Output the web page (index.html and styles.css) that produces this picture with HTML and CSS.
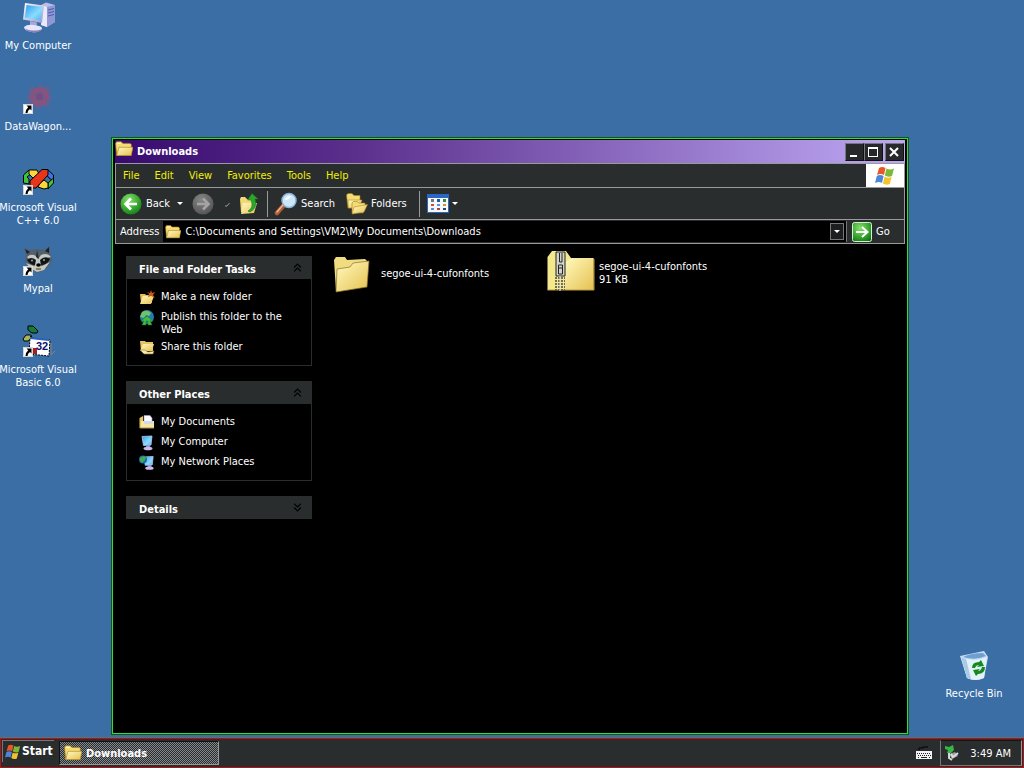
FILE: index.html
```html
<!DOCTYPE html>
<html lang="en">
<head>
    <meta charset="UTF-8">
    <meta name="viewport" content="width=device-width, initial-scale=1.0">
    <title>Downloads</title>
    <link rel="stylesheet" href="styles.css">
</head>
<body>
    <!-- Shared icons -->
    <svg class="sprite" aria-hidden="true">
        <defs>
            <linearGradient id="g-folder" x1="0" y1="0" x2="1" y2="1">
                <stop offset="0" stop-color="#fffbc0"/><stop offset="1" stop-color="#e6c050"/>
            </linearGradient>
            <linearGradient id="g-screen" x1="0" y1="0" x2="1" y2="1">
                <stop offset="0" stop-color="#2f9cf0"/><stop offset="0.6" stop-color="#8adcff"/><stop offset="1" stop-color="#4fb0f0"/>
            </linearGradient>
            <linearGradient id="g-metal" x1="0" y1="0" x2="1" y2="1">
                <stop offset="0" stop-color="#ffffff"/><stop offset="1" stop-color="#9a98cc"/>
            </linearGradient>
            <radialGradient id="g-green" cx="0.4" cy="0.3" r="0.8">
                <stop offset="0" stop-color="#8be070"/><stop offset="0.6" stop-color="#34a52c"/><stop offset="1" stop-color="#14701a"/>
            </radialGradient>
            <radialGradient id="g-grey" cx="0.4" cy="0.3" r="0.8">
                <stop offset="0" stop-color="#858585"/><stop offset="1" stop-color="#505050"/>
            </radialGradient>
        </defs>
        <symbol id="folder" viewBox="0 0 16 16">
            <path d="M0.5 3 L1.5 1.5 H5.5 L7 3 H13.5 L14.5 4 V13.5 H1.5 Z" fill="#f5dc72" stroke="#a87e1c" stroke-width="0.6"/>
            <path d="M3.5 6.5 H16 L14.3 13.8 H1.5 Z" fill="url(#g-folder)" stroke="#b08a28" stroke-width="0.6"/>
            <path d="M2 3 H5" stroke="#fffbd0"/>
        </symbol>
        <symbol id="flag" viewBox="0 0 20 18">
            <path d="M4 1 Q7 -1 10.500 1 L9 8 Q5.500 6 2 8 Z" fill="#e8572a"/>
            <path d="M11.500 1.500 Q15 3.500 19 1.500 L17 9 Q13 10.500 9.800 8.500 Z" fill="#7db83a"/>
            <path d="M1.800 9 Q5 7 8.600 9 L7 16 Q4 14 0 16 Z" fill="#4a86dc"/>
            <path d="M9.600 9.500 Q12 11.500 16.600 10 L14.800 17 Q11 18.500 7.900 16.500 Z" fill="#f4c22c"/>
        </symbol>
        <symbol id="pc" viewBox="0 0 16 16">
            <path d="M3 1.500 L13 1 L12 10 L4.500 10.500 Z" fill="url(#g-screen)" stroke="#b4c8f0" stroke-width="0.8"/>
            <path d="M7 10 H11 L11.500 13 H7 Z" fill="#7e9be0"/>
            <ellipse cx="9" cy="13.500" rx="4.500" ry="1.800" fill="#d4b8ec"/>
        </symbol>
        <symbol id="shortcut" viewBox="0 0 10 10">
            <path d="M0 0 H10 V10 H0 Z" fill="#fff"/>
            <path d="M0.500 0.500 H9.500 V9.500 H0.500 Z" fill="none" stroke="#b8b8b8" stroke-width="0.6"/>
            <path d="M3.500 1.500 H8.500 V6.500 L7 5 Q4.500 6.500 4.500 9 H2.500 Q2.500 5.500 5.200 3.200 Z" fill="#000"/>
        </symbol>
    </svg>

    <main class="desktop">
        <nav class="desktop-icons" aria-label="Desktop">
            <a class="shortcut" href="#">
                <svg viewBox="0 0 32 32">
                    <path d="M19 3 L24 0.500 L33 3 V20 L25 25 L19 23 Z" fill="#b9bde8"/>
                    <path d="M19 3 L25 5 V25 L19 23 Z" fill="#e9e9fc"/>
                    <path d="M25 5 L33 3 V20 L25 25 Z" fill="#8f96d4"/>
                    <path d="M26 8 L32 6.500 M26 11 L32 9.500 M26 14 L32 12.500" stroke="#4f5aa8"/>
                    <path d="M3 1 L22 3.500 L20 21 L1 17.500 Z" fill="url(#g-metal)"/>
                    <path d="M4.500 3 L20.300 5 L18.600 18.500 L2.800 15.800 Z" fill="url(#g-screen)"/>
                    <path d="M8 19 L15 20.500 L14.500 25 H8 Z" fill="#a6a8dc"/>
                    <path d="M2 25 Q5 22 12 23 Q21 24 20 27 Q16 31 10 30 Q2 29 2 25 Z" fill="#e8e6fa"/>
                    <path d="M2 26 Q5 30 12 30.500 Q17 31 20 27 Q16 29 11 28.500 Q5 28 2 26 Z" fill="#8a80b8"/>
                </svg>
                <span>My Computer</span>
            </a>
            <a class="shortcut" href="#">
                <svg viewBox="0 0 32 32">
                    <path d="M9 3 L15 5 L19 1 L22 4 L28 3 L27 9 L30 14 L27 19 L28 24 L20 23 L16 27 L12 23 L7 20 L5 15 L7 9 Z" fill="#8c5484" opacity="0.5"/>
                    <circle cx="17.500" cy="13.500" r="7" fill="none" stroke="#b8435f" stroke-width="4" stroke-dasharray="3 1" opacity="0.6"/>
                    <circle cx="17.500" cy="13.500" r="3.500" fill="#7a4a80"/>
                    <use href="#shortcut" x="1" y="21" width="10" height="10"/>
                </svg>
                <span>DataWagon...</span>
            </a>
            <a class="shortcut" href="#">
                <svg viewBox="0 0 32 32">
                    <g stroke="#000" stroke-width="1" stroke-linejoin="round">
                        <path d="M7 6 L1.500 11 V19 L7 20 V15 L5 13 L10 9 Z" fill="#3cc43c"/>
                        <path d="M7 6 H15 L17 10 L11 14 L7 10 Z" fill="#f8d83c"/>
                        <path d="M26 6 L31.500 11 V17 L27 14 L24 10 Z" fill="#3f74e0"/>
                        <path d="M31.500 14 V19 L26 25 V19 Z" fill="#40c840"/>
                        <path d="M18 19 L22 16 L26 19 V24 L22 25 L16 23 Z" fill="#f8d83c"/>
                        <path d="M20 5.500 H26 V11 L14 24 H8 V17 Z" fill="#e83418"/>
                    </g>
                    <use href="#shortcut" x="1" y="21" width="10" height="10"/>
                </svg>
                <span>Microsoft Visual C++ 6.0</span>
            </a>
            <a class="shortcut" href="#">
                <svg viewBox="0 0 32 32">
                    <path d="M2 3 L9 5 Q15 3 22 5 L28 1 L28 9 L30 14 L28 20 L22 25 L15 28 L7 22 L3 17 L4 10 Z" fill="#51606a"/>
                    <path d="M3 4 L8 7 L5 9 Z M27 2 L23 6 L27 8 Z" fill="#1c2228"/>
                    <path d="M5 12 Q9 8 14 11 L16 14 L19 10 Q25 7 29 12 L24 13 L20 15 L18 21 L13 21 L12 15 L7 14 Z" fill="#c4c8c2"/>
                    <path d="M5 15 Q9 11 14 15 L13 20 Q8 20 5 15 Z M18 15 Q23 10 28 14 Q25 20 19 20 Z" fill="#111518"/>
                    <path d="M15 5 L17 14 L14 12 Z" fill="#22282c"/>
                    <path d="M4 18 L12 21 L15 20 L20 21 L28 17 L22 25 L15 27 L8 23 Z" fill="#c8c6b8"/>
                    <circle cx="10" cy="15.500" r="1" fill="#9aa"/><circle cx="22" cy="15" r="1" fill="#9aa"/>
                    <ellipse cx="16.500" cy="20" rx="2.300" ry="1.800" fill="#000"/>
                    <path d="M14 24 H19" stroke="#433"/>
                    <use href="#shortcut" x="1" y="21" width="10" height="10"/>
                </svg>
                <span>Mypal</span>
            </a>
            <a class="shortcut" href="#">
                <svg viewBox="0 0 32 32">
                    <g stroke="#000">
                        <path d="M6 0 H11 L16 5 L15 7 H10 L6 4 Z" fill="#177a38"/>
                        <path d="M1 13 L4 9 H9 L10 12 L6 15 H2 Z" fill="#a7b850"/>
                        <path d="M8 10 L11 12" fill="none"/>
                        <path d="M8 12 L28 14 L27 30 L7 28 Z" fill="#fff" stroke-dasharray="2 1"/>
                    </g>
                    <path d="M29 17 V29 L33 25" stroke="#858585" fill="none"/>
                    <path d="M8 12 L27 14" stroke="#2f62bc" stroke-width="2"/>
                    <path d="M10 22 H15 V28 H10 Z" fill="#a32020"/>
                    <text x="14" y="24" class="badge-number">32</text>
                    <use href="#shortcut" x="1" y="21" width="10" height="10"/>
                </svg>
                <span>Microsoft Visual Basic 6.0</span>
            </a>
        </nav>

        <a class="shortcut recycle-bin" href="#">
            <svg viewBox="0 0 32 32">
                <path d="M2 6 L26 1 L30 7 L26 28 Q17 32 9 28 Z" fill="#c4dff0"/>
                <path d="M3 7 Q16 13 29 7 L26 28 Q17 32 9 28 Z" fill="#e3f1fa"/>
                <path d="M5 7 Q13 3 25 3 L28 6 Q17 11 5 7 Z" fill="#6f9fd0"/>
                <path d="M3 7 L9 28 L13 29 L8 9 Z" fill="#a8cbe8"/>
                <path d="M14 18 Q14 12 21 12 L23 10 L26 16 L19 17 L21 15 Q18 15 17 18 Z M27 17 Q27 24 20 24 L18 26 L15 20 L22 19 L20 21 Q23 21 24 17 Z" fill="#158a1c"/>
            </svg>
            <span>Recycle Bin</span>
        </a>

        <section class="window">
            <header class="title-bar">
                <svg class="icon-18"><use href="#folder"/></svg>
                <h1>Downloads</h1>
                <div class="window-buttons">
                    <button type="button" aria-label="Minimize"><svg viewBox="0 0 16 16"><path d="M4 12 H11" stroke="#fff" stroke-width="2"/></svg></button>
                    <button type="button" aria-label="Maximize"><svg viewBox="0 0 16 16"><path d="M3 3.500 H13 M3.500 3 V13 M12.500 3 V13 M3 12.500 H13 M3 4.500 H13" stroke="#fff"/></svg></button>
                    <button type="button" aria-label="Close" class="close"><svg viewBox="0 0 16 16"><path d="M4 4 L12 12 M12 4 L4 12" stroke="#fff" stroke-width="2"/></svg></button>
                </div>
            </header>

            <div class="menu-bar">
                <button type="button">File</button>
                <button type="button">Edit</button>
                <button type="button">View</button>
                <button type="button">Favorites</button>
                <button type="button">Tools</button>
                <button type="button">Help</button>
                <div class="brand"><svg><use href="#flag"/></svg></div>
            </div>

            <div class="tool-bar">
                <button type="button" class="back">
                    <svg class="icon-22" viewBox="0 0 22 22">
                        <circle cx="11" cy="11" r="10.500" fill="url(#g-green)"/>
                        <path d="M17 11 H6 M11 5.500 L5.500 11 L11 16.500" fill="none" stroke="#fff" stroke-width="2.600"/>
                    </svg>
                    Back
                    <i class="arrow"></i>
                </button>
                <button type="button" class="forward" aria-label="Forward" disabled>
                    <svg class="icon-22" viewBox="0 0 22 22">
                        <circle cx="11" cy="11" r="10.500" fill="url(#g-grey)"/>
                        <path d="M5 11 H16 M11 5.500 L16.500 11 L11 16.500" fill="none" stroke="#a4a4a4" stroke-width="2.600"/>
                    </svg>
                    <svg class="faded-arrow" viewBox="0 0 6 6"><path d="M1 5 H3 M3 5 L5.500 2" stroke="#999" fill="none"/></svg>
                </button>
                <button type="button" class="up" aria-label="Up">
                    <svg class="icon-22" viewBox="0 0 22 22">
                        <path d="M2 6 L3 4 H7 L9 6 H16 V19 H3 Z" fill="#f2d877"/>
                        <path d="M5 10 H19 L16 20 L3 21 Z" fill="url(#g-folder)"/>
                        <path d="M10 18 Q16 15 13 7 H9.500 L14 0.500 L20 6 H17 Q20 15 12 19 Z" fill="#2da52d" stroke="#127a18" stroke-width="0.600"/>
                    </svg>
                </button>
                <span class="divider"></span>
                <button type="button" class="search">
                    <svg class="icon-24" viewBox="0 0 24 24">
                        <path d="M10 13 L3 21" stroke="#b05c38" stroke-width="4.500" stroke-linecap="round"/>
                        <path d="M9 13 L3 20" stroke="#f0b08c" stroke-width="1.500" stroke-linecap="round"/>
                        <circle cx="15" cy="8.500" r="7" fill="#cbe8fa" stroke="#8fb2d8" stroke-width="1.500"/>
                        <path d="M11 8 Q12 4 17 4 Q15 8 11 8" fill="#fff"/>
                    </svg>
                    Search
                </button>
                <button type="button" class="folders">
                    <svg class="icon-22" viewBox="0 0 22 22">
                        <path d="M0.500 2 L2 0.500 H6 L8 2.500 H14 V6 L12 15 H2 Z" fill="#f5dc72" stroke="#a87e1c" stroke-width="0.600"/>
                        <path d="M2 7 H16 L13 15 H2.500 Z" fill="url(#g-folder)" stroke="#b08a28" stroke-width="0.600"/>
                        <path d="M6 10 L7.500 8.500 H11 L13 10 H19 V14 L17 20 H6 Z" fill="#f5dc72" stroke="#a87e1c" stroke-width="0.600"/>
                        <path d="M8 14 L21.500 11.500 L18 19 L6 21 Z" fill="url(#g-folder)" stroke="#b08a28" stroke-width="0.600"/>
                    </svg>
                    Folders
                </button>
                <span class="divider"></span>
                <button type="button" class="views" aria-label="Views">
                    <svg class="icon-22" viewBox="0 0 22 22">
                        <path d="M0 1 H22 V20 H0 Z" fill="#2b66c4"/>
                        <path d="M1 5 H21 V19 H1 Z" fill="#f4f8ff"/>
                        <path d="M4 6 H7 V9 H4 Z" fill="#777"/><path d="M10 6 H13 V9 H10 Z" fill="#2455a8"/><path d="M16 6 H19 V9 H16 Z" fill="#2d8c34"/>
                        <path d="M4 11 H7 V13 H4 Z" fill="#d44c38"/><path d="M10 11 H13 V13 H10 Z" fill="#5f8fd8"/><path d="M16 11 H19 V13 H16 Z" fill="#d8922c"/>
                        <path d="M4 15 H7 V17 H4 Z" fill="#5a8bd0"/><path d="M10 15 H13 V17 H10 Z" fill="#c04030"/><path d="M16 15 H19 V17 H16 Z" fill="#23457c"/>
                    </svg>
                    <i class="arrow"></i>
                </button>
            </div>

            <form class="address-bar">
                <label for="address">Address</label>
                <div class="address-box">
                    <svg class="icon-16"><use href="#folder"/></svg>
                    <input id="address" type="text" value="C:\Documents and Settings\VM2\My Documents\Downloads">
                    <button type="button" class="drop" aria-label="Show addresses"><i class="arrow"></i></button>
                </div>
                <button type="button" class="go">
                    <svg class="icon-20" viewBox="0 0 20 20">
                        <rect x="0.500" y="0.500" width="19" height="19" rx="2" fill="url(#g-green)" stroke="#d4f0d0"/>
                        <path d="M4 10 H15 M10 5 L15.500 10 L10 15" fill="none" stroke="#fff" stroke-width="2"/>
                    </svg>
                    Go
                </button>
            </form>

            <div class="content">
                <aside class="side-bar">
                    <section class="panel">
                        <h2>File and Folder Tasks <svg viewBox="0 0 8 8"><path d="M1 4 L4 1 L7 4 M1 7.500 L4 4.500 L7 7.500"/></svg></h2>
                        <ul>
                            <li><a href="#">
                                <svg class="icon-16" viewBox="0 0 16 16">
                                    <path d="M1 4 H6 L7 5 H13 V13 H2 Z" fill="#e8bd54"/>
                                    <path d="M4 6 H15 L12 14 H1 Z" fill="url(#g-folder)"/>
                                    <path d="M12 0 L13 3 L16 2 L14 5 L16 8 L12 6 L9 7 L10 4 L8 2 L11 3 Z" fill="#c85a20"/>
                                </svg>
                                <span>Make a new folder</span></a></li>
                            <li><a href="#">
                                <svg class="icon-16" viewBox="0 0 16 16">
                                    <circle cx="8" cy="7" r="7" fill="#247cb4"/>
                                    <path d="M3 2 Q8 -1 12 3 L10 6 L7 5 L5 8 L1 7 Z" fill="#6fc46a"/>
                                    <path d="M8 6 L14 11 H11 L13 15 H9 V11 H7 V15 H3 L5 11 H2 Z" fill="#46bc3e" stroke="#167026" stroke-width="0.500"/>
                                </svg>
                                <span>Publish this folder to the Web</span></a></li>
                            <li><a href="#">
                                <svg class="icon-16" viewBox="0 0 16 16">
                                    <path d="M1 1 H6 L7 2 H14 V11 H2 Z" fill="#e8c460"/>
                                    <path d="M4 4 H15 L13 11 H1 Z" fill="url(#g-folder)"/>
                                    <path d="M1 10 Q6 9 9 12 L15 11 L14 14 H5 Z" fill="#f8ecb4" stroke="#8c6c28" stroke-width="0.600"/>
                                </svg>
                                <span>Share this folder</span></a></li>
                        </ul>
                    </section>
                    <section class="panel">
                        <h2>Other Places <svg viewBox="0 0 8 8"><path d="M1 4 L4 1 L7 4 M1 7.500 L4 4.500 L7 7.500"/></svg></h2>
                        <ul>
                            <li><a href="#">
                                <svg class="icon-16" viewBox="0 0 16 16">
                                    <path d="M0.500 3 L4 1 V13 H0.500 Z" fill="#e8c460"/>
                                    <path d="M5 0.500 H11 L13 3 V9 H5 Z" fill="#fafaff" stroke="#9ba6c8" stroke-width="0.600"/>
                                    <path d="M2 6 H15 V13 H2 Z" fill="#f4e8a8"/>
                                    <path d="M5 6 H14 V9 H5 Z" fill="#d4d8ee"/>
                                    <path d="M1 13 H15" stroke="#b8913c"/>
                                </svg>
                                <span>My Documents</span></a></li>
                            <li><a href="#"><svg class="icon-16"><use href="#pc"/></svg><span>My Computer</span></a></li>
                            <li><a href="#">
                                <svg class="icon-16" viewBox="0 0 16 16">
                                    <use href="#pc" x="2" y="0" width="15" height="16"/>
                                    <circle cx="4" cy="4.500" r="4" fill="#2368a8"/>
                                    <path d="M1 3 Q4 0 7 2 L6 5 L3 8 L1 6 Z" fill="#3faa58"/>
                                </svg>
                                <span>My Network Places</span></a></li>
                        </ul>
                    </section>
                    <section class="panel">
                        <h2>Details <svg viewBox="0 0 8 8"><path d="M1 0.500 L4 3.500 L7 0.500 M1 4 L4 7 L7 4"/></svg></h2>
                    </section>
                </aside>

                <div class="files">
                    <a class="file" href="#">
                        <svg viewBox="0 0 48 48">
                            <path d="M5 11 L7 8 H16 L18 11 L36 10 L38 12 V36 L7 42 Z" fill="#f1dd80"/>
                            <path d="M8 20 L21 18 L24 14 L40 12 L38 38 L7 43 Z" fill="url(#g-folder)" stroke="#86702c" stroke-width="0.700"/>
                        </svg>
                        <span>segoe-ui-4-cufonfonts</span>
                    </a>
                    <a class="file" href="#">
                        <svg viewBox="0 0 48 48">
                            <path d="M0.500 8 L5 2 H19 L24 9 H46.500 V41 H0.500 Z" fill="#f4e88c"/>
                            <path d="M24 9.500 H46.500 V41 H17 V14 Z" fill="url(#g-folder)"/>
                            <path d="M0.500 41 H47 V10" fill="none" stroke="#bd9a40"/>
                            <path d="M9 3 H18 V27 H9 Z" fill="#d4d4c8" stroke="#222"/>
                            <path d="M12.500 4 V13 H15 V4 M11.500 16 H15.500 V25 H11.500 Z M12 19 H15" fill="none" stroke="#222"/>
                            <path d="M8 29 H18 M8 32 H18 M8 35 H18 M8 38 H18 M8 41 H18" stroke="#444" stroke-width="1.500" stroke-dasharray="2 1"/>
                            <path d="M13 27 V42" stroke="#ddd"/>
                        </svg>
                        <span>segoe-ui-4-cufonfonts<br>91 KB</span>
                    </a>
                </div>
            </div>
        </section>
    </main>

    <footer class="task-bar">
        <button type="button" class="start"><svg class="icon-16"><use href="#flag"/></svg>Start</button>
        <button type="button" class="task"><svg class="icon-18"><use href="#folder"/></svg>Downloads</button>
        <svg class="keyboard" viewBox="0 0 16 14">
            <path d="M3 4 V2 H7 V1 H12" stroke="#000" fill="none"/>
            <path d="M0 5 H16 V13 H0 Z" fill="#f2f2f2"/>
            <path d="M1 7.500 H15 M2 9.500 H15" stroke="#222" stroke-dasharray="1 1"/>
            <path d="M2 11.500 H3 M5 11.500 H11 M13 11.500 H14" stroke="#222"/>
        </svg>
        <div class="tray">
            <svg class="icon-16" viewBox="0 0 16 16">
                <path d="M5 9 L8 14 L14 11 L11 7 Z" fill="#999"/>
                <path d="M7 9 L9 12 L14 8" stroke="#ddd" stroke-width="2" fill="none"/>
                <path d="M1 1 L5 2 L9 0 L10 5 L7 8 L3 8 L4 5 L1 4 Z" fill="#35b843"/>
                <path d="M5 8 V13 L8 15" stroke="#d8d8d8" stroke-width="2" fill="none"/>
            </svg>
            <time datetime="03:49">3:49 AM</time>
        </div>
    </footer>
</body>
</html>
```
FILE: styles.css
```css
* {
    box-sizing: border-box;
}
body {
    margin: 0;
    height: 100vh;
    display: flex;
    flex-direction: column;
    overflow: hidden;
    background: #3a6ea5;
    color: #fff;
    font-family: "DejaVu Sans Condensed", "DejaVu Sans", sans-serif;
    font-size: 11px;
    line-height: 13px;
}
button, input {
    font: inherit;
    color: inherit;
    background: none;
    border: 0;
    padding: 0;
    margin: 0;
}
button {
    display: flex;
    align-items: center;
    white-space: nowrap;
}
a {
    color: inherit;
    text-decoration: none;
}
svg {
    display: block;
    flex: none;
}
h1, h2, ul {
    margin: 0;
    padding: 0;
    font-size: 11px;
    list-style: none;
}
.sprite {
    position: absolute;
    width: 0;
    height: 0;
}
.icon-16 {
    width: 16px;
    height: 16px;
}
.icon-18 {
    width: 18px;
    height: 18px;
}
.icon-20 {
    width: 20px;
    height: 20px;
}
.icon-22 {
    width: 22px;
    height: 22px;
}
.icon-24 {
    width: 24px;
    height: 24px;
}
.arrow {
    border: 3px solid transparent;
    border-top-color: #fff;
    border-bottom: 0;
}

/* Desktop */
.desktop {
    flex: 1;
    min-height: 0;
    position: relative;
}
.desktop-icons {
    display: grid;
    grid-template-columns: 76px;
    grid-auto-rows: 81px;
    padding-top: 2px;
}
.shortcut {
    display: flex;
    flex-direction: column;
    align-items: center;
    gap: 5px;
    min-width: 0;
    text-align: center;
}
.shortcut svg {
    width: 32px;
    height: 32px;
    overflow: visible;
}
.desktop-icons span {
    width: 80px;
}
.badge-number {
    font-family: "Liberation Sans", sans-serif;
    font-size: 11px;
    font-weight: bold;
    fill: #10106c;
}
.recycle-bin {
    position: absolute;
    right: 12px;
    bottom: 38px;
    width: 76px;
}

/* Window */
.window {
    position: absolute;
    left: 111px;
    right: 115px;
    top: 137px;
    bottom: 3px;
    display: flex;
    flex-direction: column;
    background: #000;
    border: 1px solid #0c5a18;
    outline: 1px solid #3cd83c;
    outline-offset: -2px;
    padding: 2px 3px;
}
.title-bar {
    display: flex;
    align-items: center;
    gap: 4px;
    height: 23px;
    padding-right: 1px;
    background: linear-gradient(90deg, #380a70, #5a2f8c 30%, #bea8f4);
}
.title-bar h1 {
    flex: 1;
}
.title-bar .icon-18 {
    align-self: flex-start;
}
.window-buttons {
    display: flex;
}
.window-buttons button {
    width: 19px;
    height: 18px;
    background: #26282a;
    border: 1px solid #111;
    border-top-color: #777;
    border-left-color: #777;
}
.window-buttons .close {
    margin-left: 2px;
}
.window-buttons svg {
    width: 16px;
    height: 16px;
}
.menu-bar, .tool-bar, .address-bar {
    display: flex;
    align-items: center;
    background: #2a2d2e;
    border: 1px solid #9a9a9a;
    border-bottom: 0;
}
.menu-bar {
    height: 24px;
    color: #f0f000;
}
.menu-bar button {
    padding: 0 8px 0 7px;
    height: 22px;
}
.brand {
    margin-left: auto;
    align-self: stretch;
    width: 38px;
    display: flex;
    align-items: center;
    justify-content: center;
    background: #fff;
}
.brand svg {
    width: 20px;
    height: 18px;
}
.tool-bar {
    height: 32px;
    padding-left: 4px;
}
.back {
    gap: 4px;
}
.back .arrow {
    margin-left: 3px;
}
.forward {
    margin-left: 9px;
    gap: 10px;
}
.faded-arrow {
    width: 6px;
    height: 6px;
}
.up {
    margin-left: 8px;
}
.divider {
    width: 1px;
    height: 26px;
    margin: 0 6px 0 7px;
    background: #9a9a9a;
}
.search, .folders, .views {
    gap: 3px;
}
.folders {
    margin-left: 11px;
}
.folders + .divider {
    margin: 0 7px 0 12px;
}
.address-bar {
    height: 25px;
    padding: 0 2px 0 4px;
    border-bottom: 1px solid #9a9a9a;
}
.address-box {
    flex: 1;
    display: flex;
    align-items: center;
    gap: 4px;
    height: 21px;
    margin: 0 5px 0 4px;
    padding: 0 2px;
    background: #000;
    border-right: 1px solid #777;
}
.address-box input {
    flex: 1;
    min-width: 0;
    outline: 0;
}
.drop {
    width: 14px;
    height: 17px;
    justify-content: center;
    background: #1c1e1f;
    border: 1px solid #777;
}
.go {
    gap: 4px;
    width: 50px;
}

/* Folder contents */
.content {
    flex: 1;
    min-height: 0;
    display: flex;
    gap: 17px;
    padding: 1px 0 0 11px;
}
.side-bar {
    flex: none;
    width: 186px;
    display: flex;
    flex-direction: column;
    gap: 15px;
    padding-top: 11px;
}
.panel h2 {
    display: flex;
    align-items: center;
    justify-content: space-between;
    height: 23px;
    padding: 3px 10px 0 13px;
    background: #2a2d2e;
}
.panel h2 svg {
    width: 9px;
    height: 9px;
    margin-top: -3px;
    fill: none;
    stroke: #000;
    stroke-width: 1;
}
.panel ul {
    display: flex;
    flex-direction: column;
    gap: 4px;
    padding: 11px 12px 9px;
    border: 1px solid #2a2d2e;
    border-top: 0;
}
.panel li a {
    display: flex;
    gap: 6px;
    min-height: 16px;
    padding-right: 8px;
}
.files {
    flex: 1;
    display: grid;
    grid-template-columns: repeat(auto-fill, 218px);
    align-content: start;
    padding-top: 4px;
}
.file {
    display: flex;
    align-items: center;
    gap: 4px;
}
.file svg {
    width: 48px;
    height: 48px;
}

/* Task bar */
.task-bar {
    flex: none;
    display: flex;
    align-items: center;
    height: 30px;
    padding: 0 1px;
    background: #2a2d2e;
    border: 1px solid #b01418;
    box-shadow: 0 -1px #6a6a72;
}
.start, .task {
    font-weight: bold;
}
.start {
    width: 52px;
    height: 22px;
    gap: 1px;
    padding-left: 2px;
    margin-bottom: 4px;
    font-size: 12px;
    border-top: 1px solid #777;
    border-left: 1px solid #777;
}
.task {
    width: 160px;
    height: 24px;
    gap: 4px;
    padding-left: 4px;
    margin-left: 5px;
    border: 1px solid #111;
    border-right-color: #999;
    border-bottom-color: #999;
    background: repeating-conic-gradient(#2a2d2e 0 25%, #84888c 0 50%) 0 0 / 2px 2px;
}
.keyboard {
    width: 16px;
    height: 14px;
    margin: 0 8px 0 auto;
}
.tray {
    display: flex;
    align-items: center;
    gap: 10px;
    height: 26px;
    padding: 0 10px 0 3px;
    border: 1px solid #777;
    border-top-color: #151515;
    border-right-color: #999;
}
```
